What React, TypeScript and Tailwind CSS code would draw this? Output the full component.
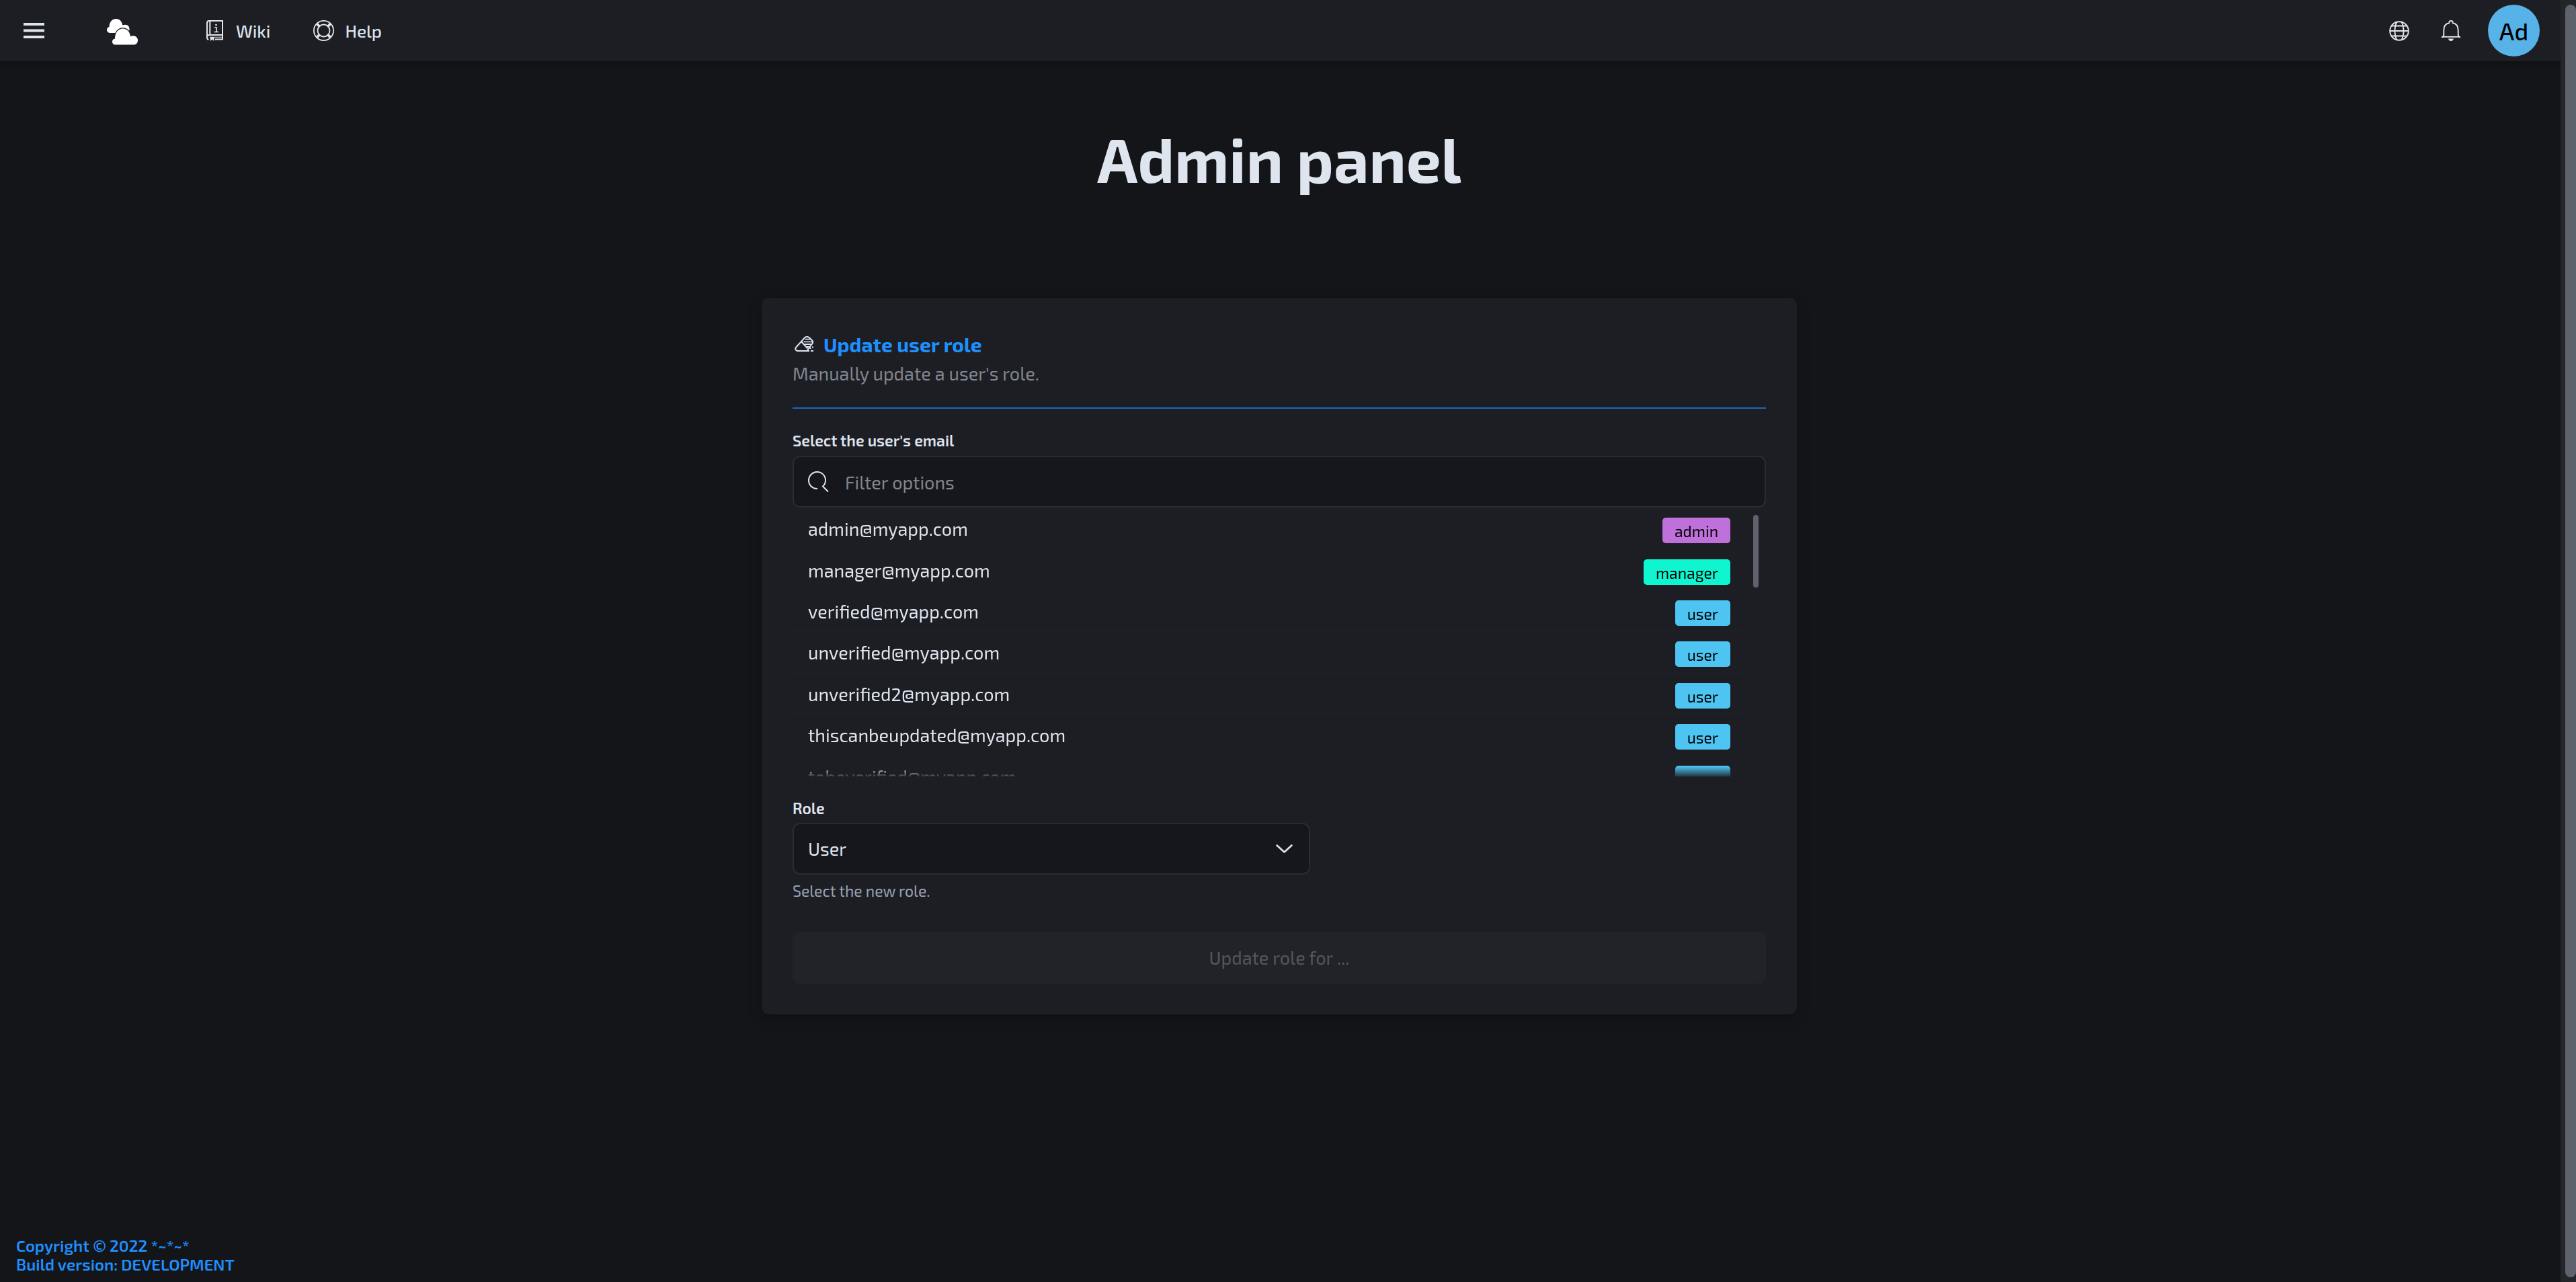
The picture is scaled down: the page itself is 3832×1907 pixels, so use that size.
import React from 'react';

type Role = 'admin' | 'manager' | 'user';

const users: { email: string; role: Role }[] = [
  { email: 'admin@myapp.com', role: 'admin' },
  { email: 'manager@myapp.com', role: 'manager' },
  { email: 'verified@myapp.com', role: 'user' },
  { email: 'unverified@myapp.com', role: 'user' },
  { email: 'unverified2@myapp.com', role: 'user' },
  { email: 'thiscanbeupdated@myapp.com', role: 'user' },
  { email: 'tobeverified@myapp.com', role: 'user' },
];

const badgeColors: Record<Role, string> = {
  admin: 'bg-[#c070da]',
  manager: 'bg-[#0ff5d0]',
  user: 'bg-[#4dc4f1]',
};

function MenuIcon() {
  return (
    <svg width="31" height="24" viewBox="0 0 31 24" fill="currentColor" aria-hidden="true">
      <path d="M0 0h31v4H0zM0 9.5h31v4H0zM0 19h31v4H0z" />
    </svg>
  );
}

function CloudsLogo() {
  return (
    <svg width="46" height="39" viewBox="0 0 46 39" fill="#fff" aria-hidden="true">
      <path d="M5 21C2 21 0 19 0 16.500C0 14 1.500 12.300 3.500 12C3.500 5 7.500 0 13.500 0C19 0 22.500 4 23.300 9.500C24.500 8.900 26 8.700 27.500 8.700C31 8.700 33.500 11.500 33.500 15C33.500 18 32.500 21 30 21Z" />
      <path
        d="M12.500 38.500C9.500 38.500 8 36.500 8 34C8 31.500 9.700 29.800 12 29.500C12 21 16.500 14.500 23.500 14.500C30 14.500 34.300 19.500 35 26.200C36.200 25.500 37.600 25.200 39 25.200C43 25.200 46 28 46 32C46 36 43.500 38.500 40 38.500Z"
        stroke="#1d1e24"
        strokeWidth="2.600"
        paintOrder="stroke"
      />
    </svg>
  );
}

function BookIcon() {
  return (
    <svg width="25" height="31" viewBox="0 0 25 31" fill="none" stroke="currentColor" strokeWidth="2" aria-hidden="true">
      <path d="M13 28.500h11V1H4C2.300 1 1 2.300 1 4v22c0 1.500.8 2.600 2.300 3" />
      <path d="M5.300 1v21M24 22H4.500C2.500 22 1 23.300 1 25.200" />
      <path d="M5 25.300h18" strokeWidth="1" />
      <path d="M12 10.800h3v6.700M11.500 17.500h6.500" strokeWidth="1.600" />
      <path d="M13.300 6h2.400v2.200h-2.400zM6 25h5.500v6l-2.700-2.200L6 31z" fill="currentColor" stroke="none" />
    </svg>
  );
}

function HelpIcon() {
  return (
    <svg width="31" height="31" viewBox="0 0 31 31" fill="none" stroke="currentColor" aria-hidden="true">
      <circle cx="15.500" cy="15.500" r="14.600" strokeWidth="1.800" />
      <circle cx="15.500" cy="15.500" r="9" strokeWidth="1.800" />
      <path
        d="M6.300 4.800l4.200 4.600M4.800 6.300l4.600 4.200M24.700 4.800l-4.200 4.600M26.200 6.300l-4.600 4.200M6.300 26.200l4.200-4.600M4.800 24.700l4.600-4.200M24.700 26.200l-4.200-4.600M26.200 24.700l-4.600-4.200"
        strokeWidth="2"
      />
    </svg>
  );
}

function GlobeIcon() {
  return (
    <svg width="30" height="30" viewBox="0 0 30 30" fill="none" stroke="currentColor" strokeWidth="1.900" aria-hidden="true">
      <circle cx="15" cy="15" r="13.800" />
      <path d="M1 15h28M4 7.500h22M4 22.500h22" />
      <path d="M11.500 1.500C7.500 9 7.500 21 11.500 28.500M18.500 1.500C22.500 9 22.500 21 18.500 28.500" />
    </svg>
  );
}

function BellIcon() {
  return (
    <svg width="30" height="31" viewBox="0 0 30 31" fill="none" stroke="currentColor" strokeWidth="1.900" aria-hidden="true">
      <path d="M1 25.700c2.300-.8 3.300-1.700 3.300-4V15c0-6 2.500-9.800 8-10.700V3c0-1.300 1-2 2.700-2s2.700.7 2.700 2v1.300c5.500.9 8 4.700 8 10.700v6.700c0 2.300 1 3.200 3.300 4" />
      <path d="M2.500 24.800h25" />
      <path d="M11 27.500h8c-.4 2.300-2 3.500-4 3.500s-3.600-1.200-4-3.500z" fill="currentColor" stroke="none" />
    </svg>
  );
}

function EraserIcon() {
  return (
    <svg width="29" height="24" viewBox="0 0 29 24" fill="none" stroke="currentColor" strokeWidth="2" aria-hidden="true">
      <path d="M22 22H5C1.500 22 .3 18.600 2.300 16.500L15 2.500c1.800-2 5-2 6.800-.2l4 3.700c1.600 1.500 1.600 3.500.6 5L18.500 22" />
      <path d="M10 8l9.500 10.500" />
      <path d="M16 4.700h7M13.500 8.500h13M15 12.200h11M18 15.800h5" strokeWidth="1.700" />
      <path d="M22.500 17h2v2h-2zM26 15.500h2v2h-2zM24 21h4v2h-4z" fill="currentColor" stroke="none" />
    </svg>
  );
}

function SearchIcon() {
  return (
    <svg width="31" height="31" viewBox="0 0 31 31" fill="none" stroke="currentColor" strokeWidth="2" aria-hidden="true">
      <path d="M14 26C6 26 1 20 1 13.500S6.500 1 13.500 1 26 6.500 26 13.500c0 3.500-1.400 6.700-4 9L30 30.500" />
    </svg>
  );
}

function ChevronIcon() {
  return (
    <svg width="25" height="13" viewBox="0 0 25 13" fill="none" stroke="currentColor" strokeWidth="2.600" strokeLinecap="round" strokeLinejoin="round" aria-hidden="true">
      <path d="M1.500 1.500l11 10 11-10" />
    </svg>
  );
}

function Header() {
  return (
    <header className="flex h-[91px] items-center bg-[#1d1e24] pr-[31px] pl-[35px] shadow-[0_2px_12px_rgba(0,0,0,0.3)]">
      <button type="button" aria-label="Open menu" className="mr-[93px]">
        <MenuIcon />
      </button>
      <a href="#home" aria-label="Home" className="mr-[102px] pt-1">
        <CloudsLogo />
      </a>
      <nav className="flex items-center gap-16 text-[26px] font-medium">
        <a href="#wiki" className="flex items-center gap-[19px]">
          <BookIcon />
          Wiki
        </a>
        <a href="#help" className="flex items-center gap-4">
          <HelpIcon />
          Help
        </a>
      </nav>
      <div className="ml-auto flex items-center gap-[47px]">
        <button type="button" aria-label="Language">
          <GlobeIcon />
        </button>
        <div className="flex items-center gap-10">
          <button type="button" aria-label="Notifications">
            <BellIcon />
          </button>
          <button type="button" aria-label="Account" className="size-[77px] rounded-full bg-[#57b2e8] text-[36px] leading-10 font-medium text-black">
            Ad
          </button>
        </div>
      </div>
    </header>
  );
}

function UserList() {
  return (
    <div className="flex h-[400px] overflow-hidden [mask-image:linear-gradient(to_bottom,#000_calc(100%-15px),rgba(0,0,0,0.15))]">
      <ul role="listbox" aria-label="Users" className="grid h-[430px] flex-1 auto-rows-fr">
        {users.map((user) => (
          <li key={user.email} role="option" aria-selected="false" className="flex items-center justify-between border-b border-[#202226] px-[23px] pt-2">
            <span className="pb-[6px] text-[27px] leading-8">{user.email}</span>
            <span className={`rounded-[5px] px-[18px] pt-[2px] text-[23px] leading-9 text-black ${badgeColors[user.role]}`}>{user.role}</span>
          </li>
        ))}
      </ul>
      <div className="mx-[11px] mt-[11px] h-[108px] w-2 rounded-full bg-[#5e626d]" />
    </div>
  );
}

function RoleForm() {
  return (
    <form className="mx-auto mt-[148px] w-full max-w-[1540px] rounded-[11px] bg-[#1d1e24] px-[46px] pt-[49px] pb-[46px] shadow-[0_6px_20px_rgba(0,0,0,0.25)]">
      <div className="flex items-center gap-[14px] pl-[3px]">
        <EraserIcon />
        <h2 className="text-[30px] leading-10 font-bold text-[#1e90ff]">Update user role</h2>
      </div>
      <p className="mt-[3px] text-[27px] leading-10 text-[#81858f]">Manually update a user's role.</p>
      <hr className="mt-[31px] border-t-2 border-[#1b69b6]" />

      <label htmlFor="email-filter" className="mt-[31px] block text-[23px] leading-8 font-semibold">
        Select the user's email
      </label>
      <div className="mt-[7px] flex h-[77px] items-center gap-6 rounded-[11px] border-2 border-[#2b2c31] bg-[#16171c] px-[21px]">
        <SearchIcon />
        <input id="email-filter" type="search" placeholder="Filter options" className="h-full min-w-0 flex-1 bg-transparent text-[27px] outline-none placeholder:text-[#81858f]" />
      </div>
      <UserList />

      <label htmlFor="role" className="mt-[31px] block text-[23px] leading-8 font-semibold">
        Role
      </label>
      <div className="relative mt-[6px] w-full max-w-[770px]">
        <select id="role" defaultValue="User" className="h-[77px] w-full appearance-none rounded-[11px] border-2 border-[#2b2c31] bg-[#16171c] px-[21px] text-[27px] outline-none">
          <option>User</option>
          <option>Manager</option>
          <option>Admin</option>
        </select>
        <span className="pointer-events-none absolute inset-y-0 right-[26px] flex items-center">
          <ChevronIcon />
        </span>
      </div>
      <p className="mt-2 text-[23px] leading-8 text-[#98a2b3]">Select the new role.</p>
      <button type="submit" disabled className="mt-[45px] h-[77px] w-full rounded-[11px] bg-[#222328] text-[27px] text-[#515761]">
        Update role for ...
      </button>
    </form>
  );
}

export default function App() {
  return (
    <div className="flex min-h-screen bg-[#141519] font-['Exo_2',Roboto,sans-serif] text-[#dfe5ef]">
      <div className="flex min-w-0 flex-1 flex-col">
        <Header />
        <main className="flex-1 pr-[3px]">
          <h1 className="mt-[84px] text-center text-[92px] leading-[120px] font-bold">Admin panel</h1>
          <RoleForm />
        </main>
        <footer className="px-6 pb-3 text-[24px] leading-7 font-semibold text-[#1e90ff]">
          <p>Copyright © 2022 *~*~*</p>
          <p>Build version: DEVELOPMENT</p>
        </footer>
      </div>
      <div className="sticky top-0 h-screen w-[23px] bg-[#242529] py-[7px] pl-[7px]">
        <div className="h-full rounded-full bg-[#5e626d]" />
      </div>
    </div>
  );
}
